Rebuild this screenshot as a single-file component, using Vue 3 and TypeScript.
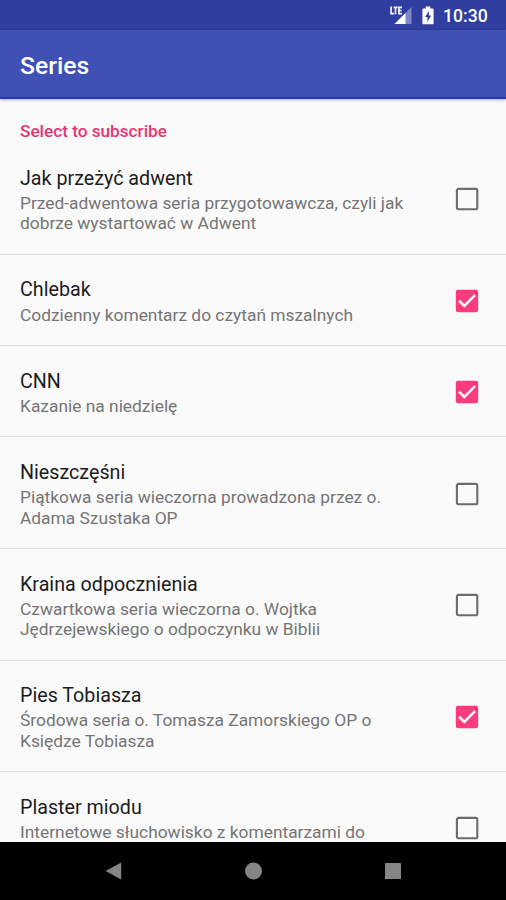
<script setup lang="ts">
import { ref } from 'vue'

interface Series {
  title: string
  summary: string[]
  checked: boolean
}

const series = ref<Series[]>([
  { title: 'Jak przeżyć adwent', summary: ['Przed-adwentowa seria przygotowawcza, czyli jak', 'dobrze wystartować w Adwent'], checked: false },
  { title: 'Chlebak', summary: ['Codzienny komentarz do czytań mszalnych'], checked: true },
  { title: 'CNN', summary: ['Kazanie na niedzielę'], checked: true },
  { title: 'Nieszczęśni', summary: ['Piątkowa seria wieczorna prowadzona przez o.', 'Adama Szustaka OP'], checked: false },
  { title: 'Kraina odpocznienia', summary: ['Czwartkowa seria wieczorna o. Wojtka', 'Jędrzejewskiego o odpoczynku w Biblii'], checked: false },
  { title: 'Pies Tobiasza', summary: ['Środowa seria o. Tomasza Zamorskiego OP o', 'Księdze Tobiasza'], checked: true },
  { title: 'Plaster miodu', summary: ['Internetowe słuchowisko z komentarzami do'], checked: false },
])
</script>

<template>
  <div class="screen">
    <div class="status">
      <svg class="signal" width="24" height="20" viewBox="0 0 24 20">
        <path d="M22.5 1V18H5.5Z" fill="#7c86c6" />
        <path d="M16.5 7V18H5.5Z" fill="#fff" />
        <path d="M2.1 0.6V7.6H4.9M4.5 1.4H8.5M6.5 1.4V8.3M12.9 1.4H9.9V7.6H12.9M9.9 4.5H12.5" fill="none" stroke="#fff" stroke-width="1.6" />
      </svg>
      <svg class="battery" width="12" height="19" viewBox="0 0 12 19">
        <path d="M3.7 0.5H8.3V2.4H10.5Q11.6 2.4 11.6 3.5V17Q11.6 18.2 10.5 18.2H1.5Q.4 18.2 .4 17V3.5Q.4 2.4 1.5 2.4H3.7Z" fill="#fff" />
        <path d="M6.9 5L3 11H5.4V15.8L9.2 9.6H6.9Z" fill="#303f9f" />
      </svg>
      <span class="clock">10:30</span>
    </div>
    <header class="toolbar"><h1>Series</h1></header>
    <main class="content">
      <h2>Select to subscribe</h2>
      <div v-for="item in series" :key="item.title" class="row" @click="item.checked = !item.checked">
        <div class="text">
          <div class="title">{{ item.title }}</div>
          <div v-for="line in item.summary" :key="line" class="summary">{{ line }}</div>
        </div>
        <svg class="check" width="24" height="24" viewBox="0 0 24 24">
          <template v-if="item.checked">
            <rect x="0.8" y="0.8" width="22.4" height="22.4" rx="2.2" fill="#fb3b7c" />
            <path d="M4 11.6L9.3 16.9L20 6.2" fill="none" stroke="#fff" stroke-width="2.5" />
          </template>
          <rect v-else x="1.9" y="1.9" width="20.4" height="20.4" rx="1.6" fill="none" stroke="#6c6c6c" stroke-width="2.1" />
        </svg>
      </div>
    </main>
    <nav class="navbar">
      <svg width="18" height="20" viewBox="0 0 18 20"><path d="M0.6 10L16.2 1.4V18.6Z" fill="#858585" /></svg>
      <svg width="18" height="18" viewBox="0 0 18 18"><circle cx="8.5" cy="9" r="8.5" fill="#858585" /></svg>
      <svg width="16" height="16" viewBox="0 0 16 16"><rect width="16" height="16" rx="0.6" fill="#858585" /></svg>
    </nav>
  </div>
</template>

<style>
body {
  margin: 0;
  overflow: hidden;
}
</style>

<style scoped>
.screen {
  width: 506px;
  height: 900px;
  display: flex;
  flex-direction: column;
  overflow: hidden;
  background: #fafafa;
  font-family: Roboto, 'Noto Sans', sans-serif;
}
.status {
  box-sizing: border-box;
  flex: 0 0 30px;
  display: flex;
  align-items: flex-start;
  justify-content: flex-end;
  padding: 6px 18px 0 0;
  background: #303f9f;
  color: #fff;
}
.battery {
  margin-left: 9px;
}
.clock {
  width: 45px;
  margin-left: 9px;
  font-size: 17.6px;
  line-height: 20px;
  font-weight: 500;
  white-space: nowrap;
}
.toolbar {
  box-sizing: border-box;
  flex: 0 0 69px;
  display: flex;
  align-items: center;
  padding: 4px 20px 0;
  background: #3f51b5;
  border-bottom: 2px solid #1e3caa;
  box-shadow: 0 1px 3px rgba(0, 0, 0, 0.3);
  color: #fff;
}
h1 {
  margin: 0;
  font-size: 24.7px;
  line-height: 30px;
  font-weight: 500;
}
.content {
  flex: 1 1 0;
  min-height: 0;
  overflow: hidden;
}
h2 {
  margin: 0;
  height: 44.2px;
  box-sizing: border-box;
  padding: 22px 20px 0;
  font-size: 17.2px;
  line-height: 20px;
  font-weight: 500;
  color: #e93474;
}
.row {
  box-sizing: border-box;
  display: flex;
  align-items: center;
  justify-content: space-between;
  min-height: 91.4px;
  padding: 23.7px 27px 20.15px 20px;
  border-bottom: 1px solid #dcdcdc;
}
.row:last-child {
  min-height: 111.6px;
  align-items: flex-start;
  border-bottom: 0;
}
.title {
  margin-bottom: 3.1px;
  font-size: 19.7px;
  line-height: 23px;
  color: #1c1c1c;
  white-space: nowrap;
}
.summary {
  font-size: 17.36px;
  line-height: 20.3px;
  color: #757575;
  white-space: nowrap;
}
.check {
  flex: none;
  margin-bottom: 2px;
}
.row:last-child .check {
  margin-top: 20px;
}
.navbar {
  flex: 0 0 58px;
  display: flex;
  align-items: center;
  justify-content: space-between;
  box-sizing: border-box;
  padding: 0 105px;
  background: #000;
}
</style>
